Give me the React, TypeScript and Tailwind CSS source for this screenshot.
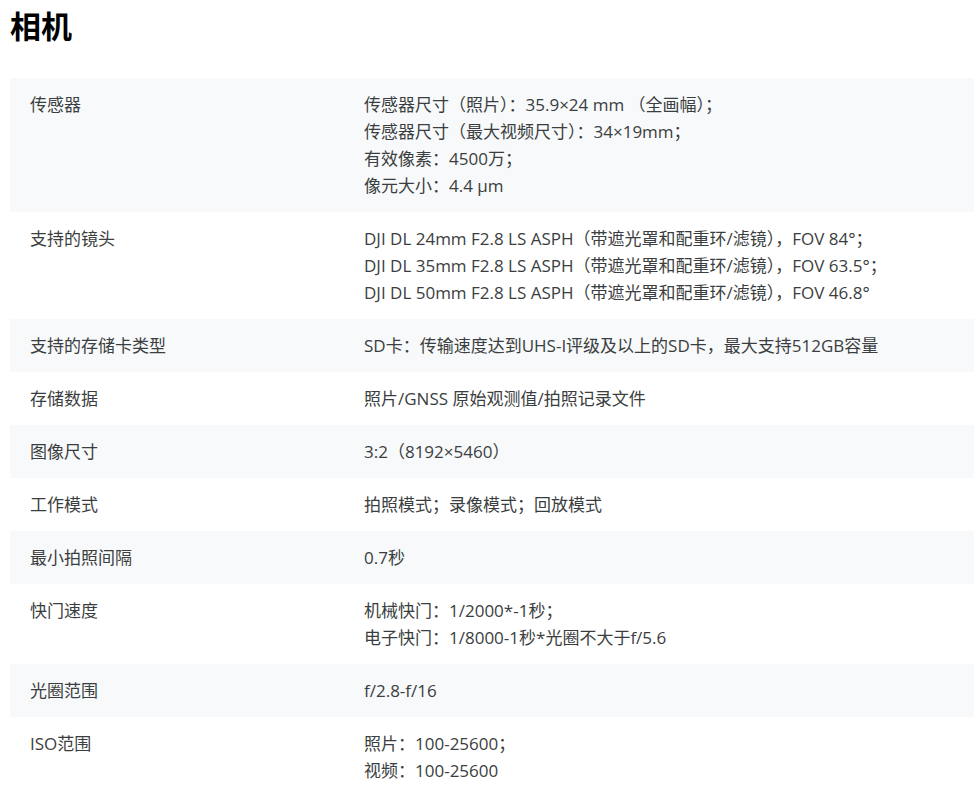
const rows: [string, string[]][] = [
  ["传感器", ["传感器尺寸（照片）：35.9×24 mm （全画幅）；", "传感器尺寸（最大视频尺寸）：34×19mm；", "有效像素：4500万；", "像元大小：4.4 μm"]],
  ["支持的镜头", ["DJI DL 24mm F2.8 LS ASPH（带遮光罩和配重环/滤镜），FOV 84°；", "DJI DL 35mm F2.8 LS ASPH（带遮光罩和配重环/滤镜），FOV 63.5°；", "DJI DL 50mm F2.8 LS ASPH（带遮光罩和配重环/滤镜），FOV 46.8°"]],
  ["支持的存储卡类型", ["SD卡：传输速度达到UHS-I评级及以上的SD卡，最大支持512GB容量"]],
  ["存储数据", ["照片/GNSS 原始观测值/拍照记录文件"]],
  ["图像尺寸", ["3:2（8192×5460）"]],
  ["工作模式", ["拍照模式；录像模式；回放模式"]],
  ["最小拍照间隔", ["0.7秒"]],
  ["快门速度", ["机械快门：1/2000*-1秒；", "电子快门：1/8000-1秒*光圈不大于f/5.6"]],
  ["光圈范围", ["f/2.8-f/16"]],
  ["ISO范围", ["照片：100-25600；", "视频：100-25600"]],
];

export default function App() {
  return (
    <div className="w-[974px] h-[798px] overflow-hidden bg-white text-[#3b3e40]" style={{ fontFamily: '"Open Sans", "Noto Sans CJK SC", sans-serif' }}>
      <h1 className="pl-[10px] pt-[2px] h-[78px] text-[31px] font-bold text-black leading-[48px]">相机</h1>
      <div className="ml-[10px]">
        {rows.map(([k, v], i) => (
          <div key={k} className={`flex py-[13px] text-[17px] leading-[27px] ${i % 2 === 0 ? "bg-[#f7f9fa]" : "bg-white"}`}>
            <div className="w-[354px] shrink-0 pl-[20px]">{k}</div>
            <div className="whitespace-nowrap">
              {v.map((l) => (
                <div key={l}>{l}</div>
              ))}
            </div>
          </div>
        ))}
      </div>
    </div>
  );
}
